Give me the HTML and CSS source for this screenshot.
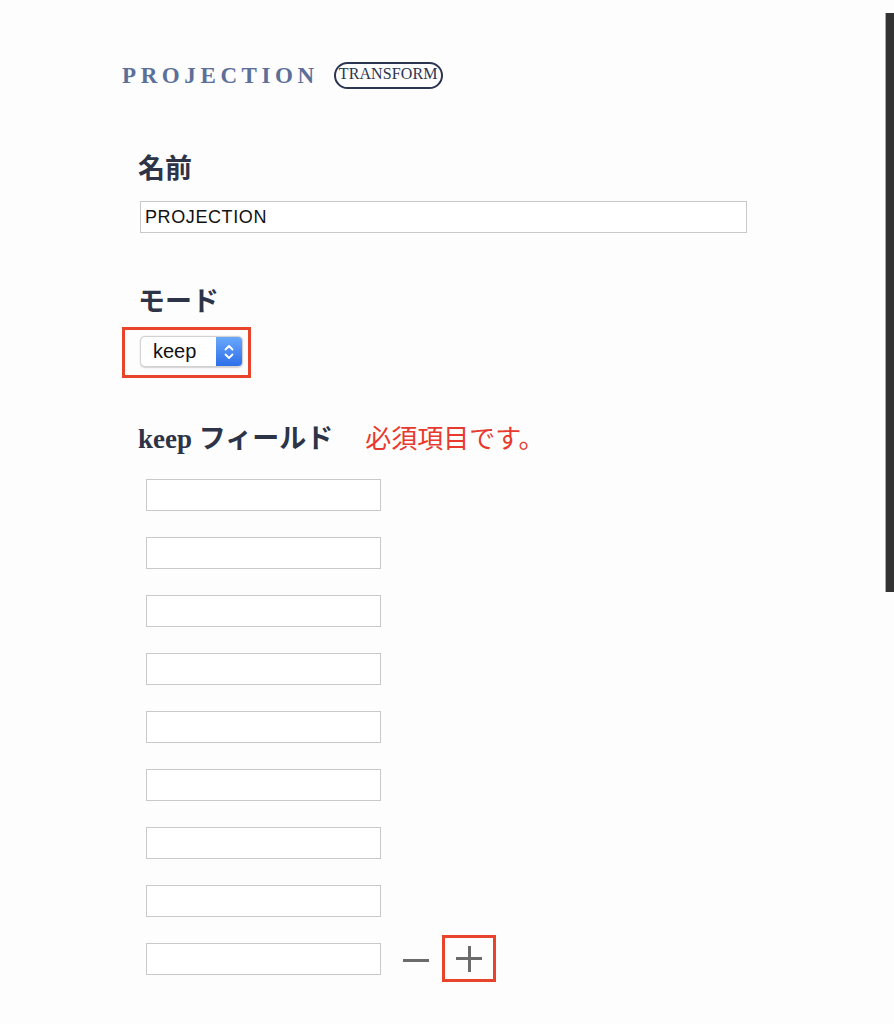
FILE: index.html
```html
<!DOCTYPE html>
<html lang="ja">
<head>
<meta charset="utf-8">
<title>PROJECTION</title>
<link rel="stylesheet" href="styles.css">
</head>
<body>
<div class="page">
  <header class="head">
    <h1 class="title">PROJECTION</h1>
    <span class="badge">TRANSFORM</span>
  </header>

  <section class="field name-field">
    <h3 class="label">名前</h3>
    <div class="text-input name-input">PROJECTION</div>
  </section>

  <section class="field mode-field">
    <h3 class="label">モード</h3>
    <div class="highlight select-hl">
      <div class="select">
        <span class="select-value">keep</span>
        <span class="stepper">
          <svg width="12" height="20" viewBox="0 0 12 20"><path d="M2.5 7.5 L6 4 L9.5 7.5" fill="none" stroke="#fff" stroke-width="1.8" stroke-linecap="round" stroke-linejoin="round"/><path d="M2.5 12.5 L6 16 L9.5 12.5" fill="none" stroke="#fff" stroke-width="1.8" stroke-linecap="round" stroke-linejoin="round"/></svg>
        </span>
      </div>
    </div>
  </section>

  <section class="field keep-field">
    <h3 class="label">keep フィールド<span class="error">必須項目です。</span></h3>
    <div class="rows">
      <div class="row"><div class="text-input small"></div></div>
      <div class="row"><div class="text-input small"></div></div>
      <div class="row"><div class="text-input small"></div></div>
      <div class="row"><div class="text-input small"></div></div>
      <div class="row"><div class="text-input small"></div></div>
      <div class="row"><div class="text-input small"></div></div>
      <div class="row"><div class="text-input small"></div></div>
      <div class="row"><div class="text-input small"></div></div>
      <div class="row last">
        <div class="text-input small"></div>
        <span class="minus"></span>
        <span class="highlight plus-hl"><span class="plus"></span></span>
      </div>
    </div>
  </section>
</div>
<div class="scroll-thumb"></div>
</body>
</html>
```

FILE: styles.css
```css
html, body {
  margin: 0;
  padding: 0;
  background: #fdfdfd;
}
body {
  width: 894px;
  height: 1024px;
  overflow: hidden;
  font-family: "Liberation Serif", "Noto Sans CJK JP", serif;
  color: #2d3447;
}
.page {
  padding: 61px 0 0 138px;
}
.head {
  display: flex;
  align-items: center;
  margin-left: -16px;
  height: 28px;
}
.title {
  margin: 0;
  font-family: "Liberation Serif", serif;
  font-weight: bold;
  font-size: 23px;
  letter-spacing: 4.6px;
  color: #5b6f99;
  line-height: 28px;
  padding-top: 2px;
}
.badge {
  margin-left: 15px;
  border: 2px solid #2b3451;
  border-radius: 14px;
  height: 23px;
  padding: 0 3px 0 3px;
  font-family: "Liberation Serif", serif;
  font-size: 16px;
  letter-spacing: 0.1px;
  line-height: 19px;
  color: #2b3451;
}
.field {
  margin: 0;
}
.label {
  margin: 0;
  font-size: 27px;
  font-weight: bold;
  line-height: 32px;
  color: #2d3447;
}
.name-field .label {
  margin-top: 64px;
}
.text-input {
  box-sizing: border-box;
  border: 1px solid #c9c9c9;
  background: #fff;
  height: 32px;
}
.name-input {
  margin-top: 16px;
  margin-left: 2px;
  width: 607px;
  font-family: "Liberation Sans", sans-serif;
  font-size: 18px;
  letter-spacing: 0.6px;
  line-height: 30px;
  padding-left: 4px;
  color: #111;
}
.mode-field .label {
  margin-top: 53px;
}
.highlight {
  border: 3px solid #e8432b;
  box-sizing: border-box;
}
.select-hl {
  display: block;
  margin-top: 9px;
  margin-left: -16px;
  width: 129px;
  height: 51px;
  padding: 6px 0 0 15px;
}
.select {
  display: flex;
  width: 103px;
  height: 31px;
  box-sizing: border-box;
  border: 1px solid #d2d2d2;
  border-radius: 5px;
  background: #fff;
  box-shadow: 0 0.5px 1.5px rgba(0,0,0,0.18);
  overflow: hidden;
}
.select-value {
  flex: 1;
  font-family: "Liberation Sans", sans-serif;
  font-size: 20px;
  line-height: 29px;
  padding-left: 12px;
  color: #111;
}
.stepper {
  width: 26px;
  display: flex;
  align-items: center;
  justify-content: center;
  background: linear-gradient(#6aa8fb, #2d6fe9);
}
.keep-field .label {
  margin-top: 45px;
}
.error {
  margin-left: 32px;
  font-weight: normal;
  font-size: 26px;
  color: #e8392e;
}
.rows {
  margin-top: 23px;
  margin-left: 8px;
}
.row {
  display: flex;
  align-items: center;
  height: 32px;
  margin-bottom: 26px;
}
.small {
  width: 235px;
  flex: none;
}
.minus {
  display: block;
  width: 26px;
  height: 3px;
  background: #6b6b6b;
  margin-left: 22px;
  margin-top: 2px;
}
.plus-hl {
  display: flex;
  align-items: center;
  justify-content: center;
  width: 54px;
  height: 47px;
  margin-left: 13px;
  margin-top: -1px;
  flex: none;
}
.plus {
  position: relative;
  display: block;
  width: 26px;
  height: 26px;
}
.plus::before,
.plus::after {
  content: "";
  position: absolute;
  background: #6b6b6b;
}
.plus::before {
  left: 0;
  top: 11.5px;
  width: 26px;
  height: 3px;
}
.plus::after {
  top: 0;
  left: 11.5px;
  width: 3px;
  height: 26px;
}
.scroll-thumb {
  position: fixed;
  right: 0;
  top: 13px;
  width: 8px;
  height: 579px;
  background: #333;
  border-left: 1px solid #aaa;
}
```
